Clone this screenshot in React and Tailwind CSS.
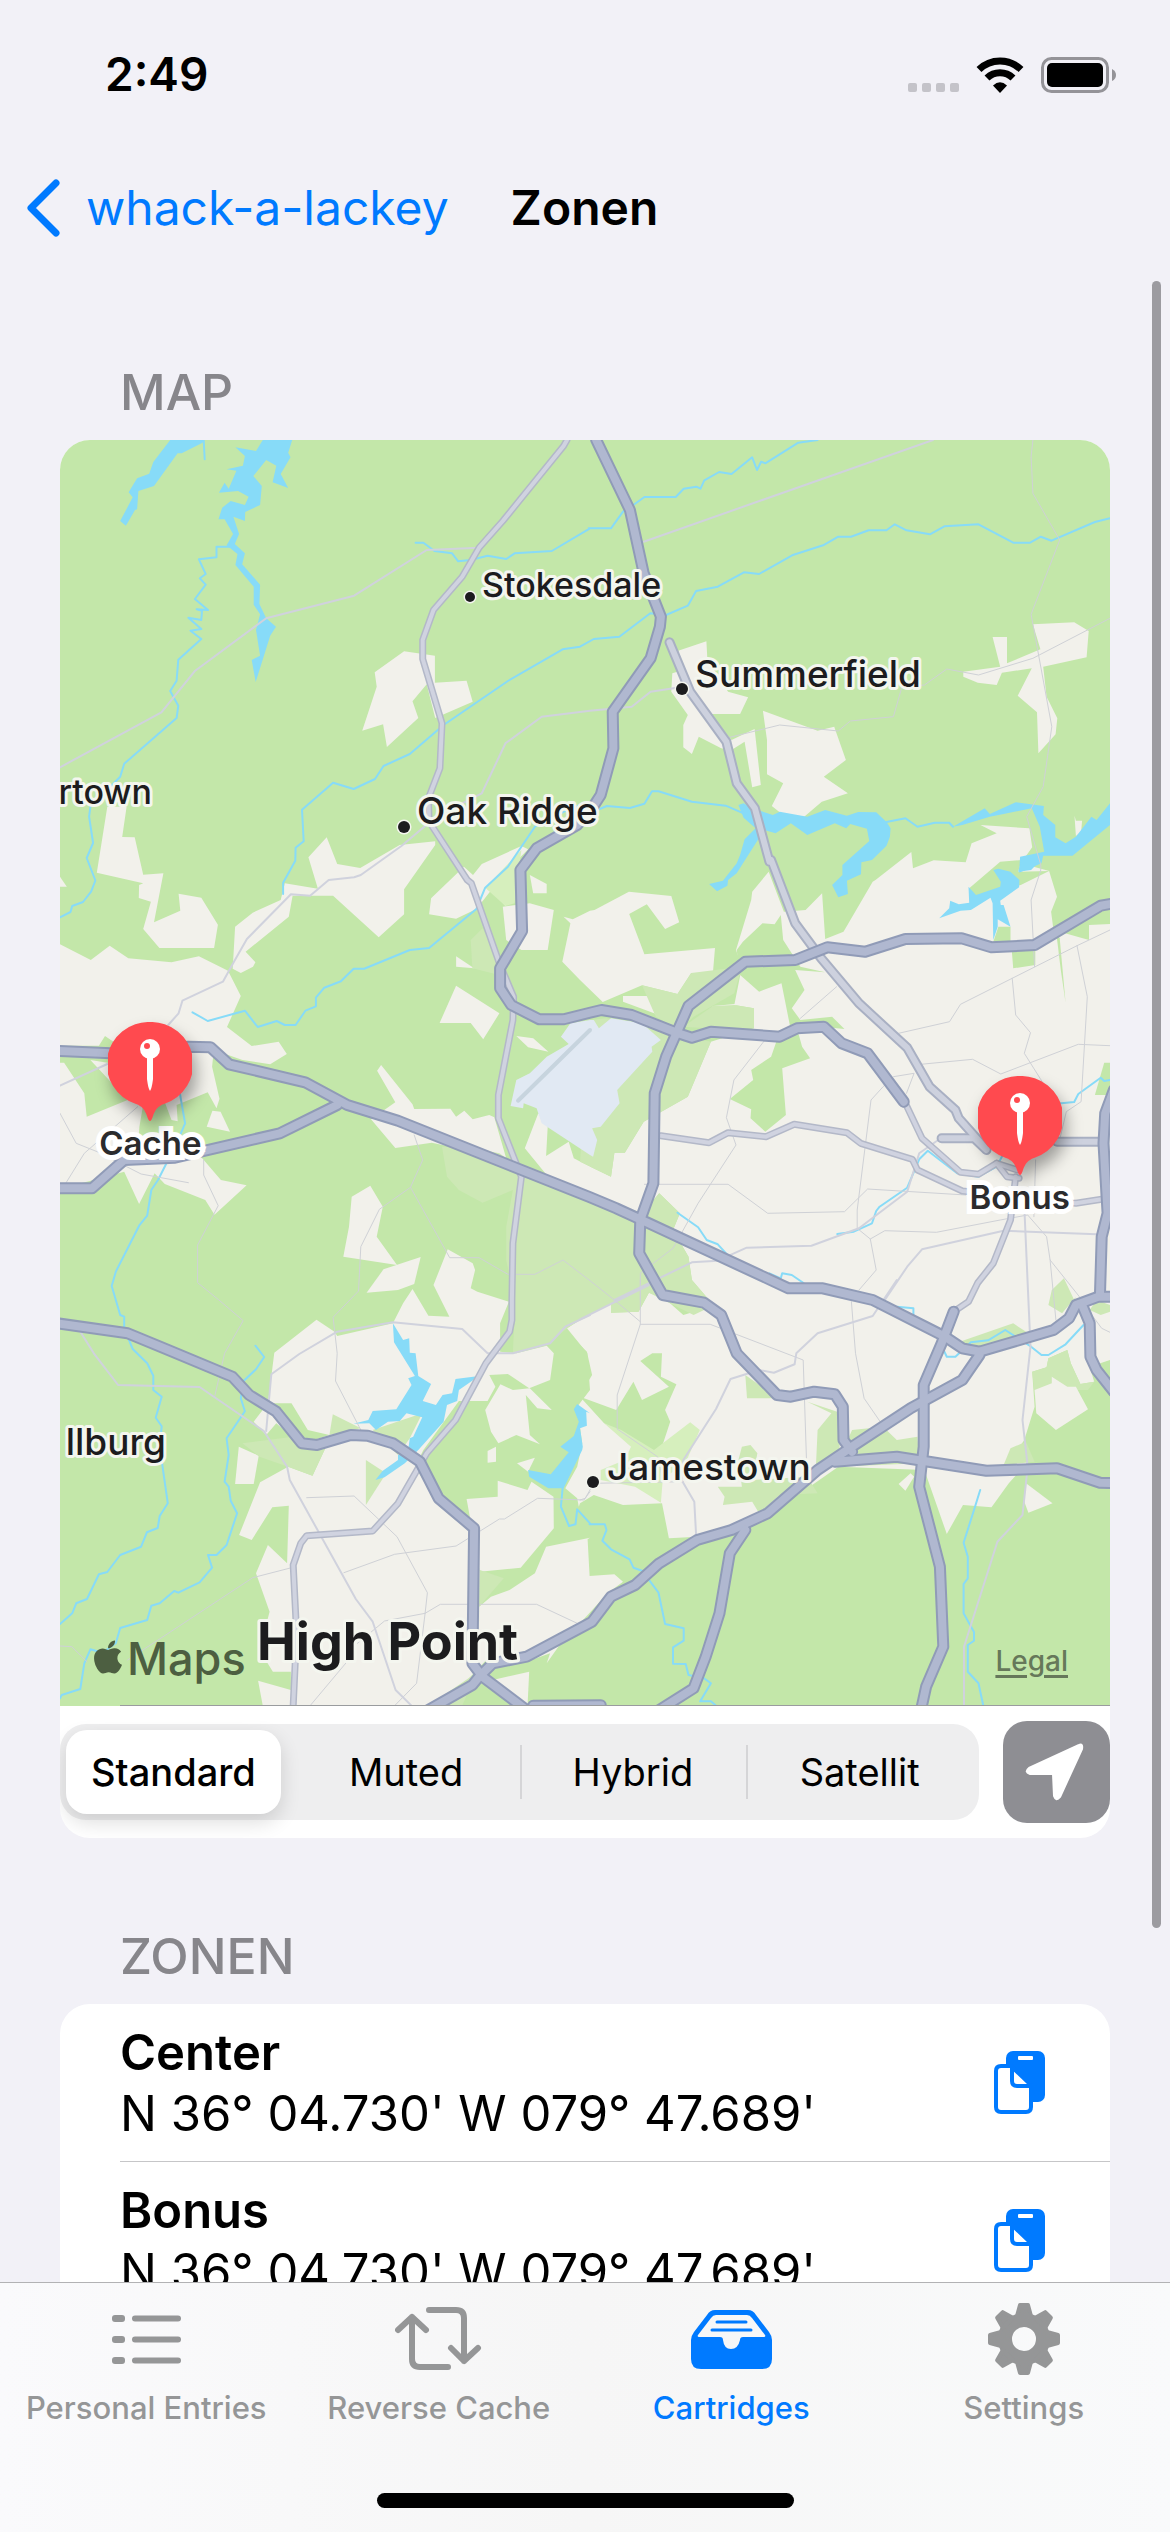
import React, { useState } from "react";
import { FaApple } from "react-icons/fa";

const SHEETS = {
  a: [0, 0, 530 / 1568],
  b: [520, 0, 540 / 1568],
  c: [0, 420, 530 / 1568],
  d: [520, 420, 540 / 1568],
  e: [0, 840, 530 / 1568],
  f: [520, 840, 540 / 1568],
};

function pts(source) {
  let sheet = SHEETS.a;
  let x = null;
  const out = [];
  for (const token of source.trim().split(/\s+/)) {
    if (SHEETS[token]) {
      sheet = SHEETS[token];
    } else if (x === null) {
      x = Number(token);
    } else {
      out.push(`${(sheet[0] + x * sheet[2]).toFixed(1)},${(sheet[1] + Number(token) / 3).toFixed(1)}`);
      x = null;
    }
  }
  return out.join(" ");
}

const URBAN = [
  "a 1018 634 1109 647 1109 728 1203 722 1221 785 1110 834 1085 733 1043 784 1060 834 967 921 956 853 894 872 937 740 931 697",
  "a 140 1100 197 1100 184 1191 221 1192 246 1304 306 1300 c 278 187 356 152 351 101 418 113 467 194 456 264 294 264 246 207 269 125 233 114 234 75 246 70 109 38",
  "c 0 253 91 300 147 257 202 295 330 307 411 289 497 332 535 408 494 501 567 558 647 545 671 582 622 613 540 600 455 570 450 620 472 716 463 745 437 697 345 735 350 812 425 900 476 960 552 976 457 1064 430 1020 310 972 280 940 234 1032 190 935 80 965 0 985",
  "c 434 800 451 752 475 755 503 815",
  "c 0 50 20 80 0 80",
  "c 763 86 a 735 1252 789 1192 820 1272 888 1284 1005 1215 1110 1204 1110 1215 c 1018 88 1018 163 943 232 808 107 688 107 677 170 549 275 578 307 571 320 535 339 511 326 518 200 570 158 653 120 665 70",
  "c 1092 163 1098 115 1195 20 1222 45 a 1248 1272 1365 1218 1385 1228 c 1315 40 1232 147 1172 176",
  "c 1123 489 1172 377 1300 460 1252 538 1215 489",
  "c 1265 80 1338 95 1318 138",
  "c 1310 140 1390 130 1461 150 1443 270 1365 270 1320 240",
  "c 1390 45 1440 72 1440 100 1400 100",
  "c 1172 289 1225 325 1172 320",
  "c 938 632 950 615 1043 733 1048 747 1155 746 1172 770 1196 752 1221 778 1270 765 1285 772 1320 895 1100 848 992 864 920 778 992 727",
  "c 1350 528 1400 535 1445 575 1385 562",
  "c 1415 760 1443 800 1438 888 1505 845 1520 895 1568 920 1568 1005 1440 945 1375 865",
  "b 285 632 367 604 370 660 430 755 488 772 465 822 378 822 440 900 507 867 525 1035 500 1042 478 905 440 930 410 925 345 890 325 942 300 922 300 855 313 825 265 755 268 700 300 690",
  "b 531 812 690 872 738 860 772 960 708 1010 778 1060 702 1085 640 1140 580 1117 557 1098 590 1030 543 1003 543 900",
  "b 1315 553 1435 547 1477 573 1471 652 1345 680 1355 770 1386 835 1381 883 1331 940 1327 817 1271 767 1312 685 1225 698 1210 735 1155 728 1113 710 1113 695 1220 680 1198 591 1240 591 1240 670 1337 628",
  "b 1436 1127 1440 1142 1458 1142 1455 1175 1440 1188",
  "c 1490 170 1517 178 1568 152 d 42 150 142 95 265 108 288 187 247 207 194 133 143 162 187 283 392 264 386 339 323 339 283 402 180 376 66 426 0 360 c 1486 305 1510 190",
  "d 125 408 227 408 223 463 125 425",
  "d 386 438 450 432 463 485 369 495",
  "d 453 270 497 120 500 95 548 35 592 155 655 150 703 100 712 237 765 215 850 65 b 858 1320 962 1236 967 1285 1027 1261 1120 1267 1137 1210 1210 1180 1163 1155 1305 1165 1313 1222 1280 1270 d 1362 33 1385 110 1368 155 1375 210 1478 240 1478 195 1539 192 f 1539 240 1480 260 1493 305 1453 312 1425 250 1415 210 1360 235 1355 262 1313 275 1320 380 1290 480 1240 555 1305 540 1245 610 1195 682 1112 675 1065 762 1000 570 750 560 640 640 530 700 340 770 258 775 238 670 125 675 40 645 0 670 e 1535 680 1530 655 1495 625 1530 560 1545 490 1530 380 1568 330 1560 220 1500 145 f 0 120 90 70 90 98 170 95 200 38 240 50 300 105 380 80 d 375 1320 325 1260 315 1190 270 1110 290 1060 230 1000 180 1060 0 990 0 905 90 950 100 878 130 878 185 785 313 710 380 545 505 505 505 445 448 435 470 320",
  "f 925 612 960 580 970 590 945 632",
  "f 1295 610 1372 670 1302 698 1290 665",
  "f 1358 85 1370 62 1402 92",
  "e 759 119 812 155 820 168 985 130 1015 70 1043 27 1090 107 1152 110 1105 15 c 1105 1275 1147 1168 1221 1210 1228 1230 1215 1285 e 1235 35 1328 65 1302 130 1302 215 1350 220 1440 197 1461 220 1450 300 1388 325 1325 282 1270 285 1288 320 1265 363 1180 363 1075 510 1050 560 1120 670 1215 740 1242 875 1240 1020 1270 1130 1205 1200 1090 1277 600 1277 586 1202 683 1230 683 1175 630 1175 590 1110 620 995 580 880 615 795 672 850 677 677 628 682 567 780 530 765 592 607 675 560 747 587 787 500 720 500 680 465 640 430 610 465 573 425 615 370 625 290 634 218",
  "e 529 500 588 527 573 612 518 612",
  "e 1203 657 1295 650 1295 602 1383 630 1395 605 1460 650 1461 745 1363 863 1242 875",
  "e 1438 800 1568 773 f 22 778 28 888 100 883 125 905 80 940 0 1030 e 1485 1085 1440 1150 1450 1120 1380 1145 1240 1130 1240 980 1275 950 1330 930 1405 880",
  "e 1258 390 1303 313 1340 330 1390 325 1455 390 1412 385 1378 345 1390 465 1420 493 1350 465 1297 490 1275 455",
  "e 1265 513 1290 500 1290 545 1265 548",
  "e 1352 550 1405 533 1385 575",
  "c 863 1010 918 977 955 1040 937 1130 997 1215 838 1190 855 1100",
  "c 907 1298 957 1228 1067 1191 1048 1272 e 1000 30 907 38",
  "e 1280 1200 1388 1175 1383 1277",
];

const WOODS = [
  "c 0 557 115 557 133 528 180 560 150 610 90 600 145 660 200 720 79 770 72 700 12 608 0 608",
  "c 245 740 300 700 330 780 380 790 360 870 230 870 235 800",
  "d 473 245 530 190 565 193 583 165 590 240 640 320 712 337 625 330 652 390 615 445 640 480 732 470 768 507 700 500 630 505 645 560 668 595 587 625 598 765 538 815 495 775 497 748 435 717 503 660 497 630 555 590 570 545 612 510 585 370 520 395 465 345 455 270",
  "d 1215 200 1250 200 1250 250 1322 260 1322 315 1258 325 1252 250 1200 245",
  "d 1383 220 1393 235 1410 428 1396 330",
  "d 1522 608 1539 608 1539 705 1495 705",
  "d 1130 85 1220 5 1283 0 1272 35 1362 33 1280 75 1150 110",
  "e 625 370 685 370 733 450 797 465 720 490 650 400",
  "f 0 195 20 215 35 285 0 345",
  "f 0 350 105 390 155 305 180 360 258 320 175 243 210 220 238 220 235 290 280 313 247 390 262 425 235 510 215 512 70 430",
];

const CLEARINGS = ["f 1320 330 1370 310 1370 290 1415 320 1440 320 1475 388 1382 450 1325 400"];

const PARKS = [
  "c 1130 860 1200 860 1300 880 1400 950 1568 1030 d 180 1070 230 1000 290 1060 270 1110 315 1190 325 1260 375 1320 f 380 80 330 105 200 38 170 95 90 98 90 70 0 120 e 1500 145 1440 195 1340 220 1345 100 c 1345 1320 1320 1200 1320 1100 1340 990 1250 1028 1180 990 1145 950",
  "c 1215 240 1250 205 1300 300 1300 345 1220 325",
  "c 1568 480 d 75 475 180 490 260 520 380 545 313 710 185 785 130 878 100 878 90 950 0 905",
  "d 180 376 283 402 323 339 470 320 448 400 330 470 290 510 220 470",
  "d 386 438 300 500 369 505 505 505 505 445 448 435",
  "d 1405 1255 1435 1320 f 1440 50 1400 100 1360 75 1370 30",
  "f 1090 190 1258 130 1310 165 1180 200",
  "f 1480 90 1500 60 1539 75 1539 95 1512 105",
  "f 480 285 575 355 485 355",
  "f 660 365 730 400 690 450 685 560 760 520 790 450 880 440 920 480 980 470 985 550 750 560 760 400",
  "f 470 500 495 495 515 520 500 600 660 590 690 640 580 645 520 700 500 665 415 675 420 650 400 620 470 620 460 540",
  "f 1313 275 1355 262 1360 235 1415 210 1425 250 1453 312 1493 305 1475 330 1400 330 1320 345",
  "f 1250 505 1295 485 1320 545 1230 555",
  "e 807 403 890 445 797 465",
  "e 540 490 690 470 730 500 787 500 747 587 675 560 590 530",
  "e 905 540 965 580 905 675",
  "e 1242 870 1313 895 1240 980",
  "e 1090 1277 1230 1180 1190 1277",
  "e 925 450 1072 400 1035 475 1000 525",
];

const MEADOWS = [
  "f 320 427 348 450 310 540 240 600 235 668 160 620 60 600 60 570 130 540 148 500 70 430 120 450 215 510",
  "c 1258 83 a 1365 1230 c 1345 130 1318 138",
];

const AIRPORT =
  "c 1568 480 1510 490 1482 530 1505 552 1440 590 1390 640 1350 660 1333 738 1370 745 1372 730 1410 745 1425 790 1568 885 d 38 890 50 840 35 805 60 800 115 730 108 690 210 575 208 560 235 540 180 490 90 475 55 505 40 480";

const LAKES = [
  "a 326 0 425 0 422 8 360 40 348 40 278 138 232 153 228 208 222 210 195 257 178 243 215 172 203 157 228 115 264 101 276 66",
  "a 600 0 687 0 675 38 682 52 653 102 675 144 629 127 640 77 610 60 572 108 597 138 592 195 548 216 547 243 513 230 530 282 517 312 547 340 539 373 592 434 590 492 610 535 639 560 622 587 579 726 567 660 592 647 580 570 592 523 573 494 573 440 519 375 525 342 493 316 512 282 487 238 469 238 480 203 505 183 547 195 558 170 527 153 470 158 487 128 499 146 522 92 493 88 541 77 547 48 519 22 580 33",
  "b 460 1095 475 1090 500 1105 560 1125 580 1115 660 1130 712 1110 775 1127 808 1116 860 1117 890 1146 902 1165 900 1190 890 1217 848 1260 817 1267 816 1303 d 775 62 778 102 750 112 732 75 762 45 b 762 1275 840 1203 833 1166 785 1152 773 1165 740 1150 660 1185 612 1150 568 1180 535 1170 455 1300 d 430 60 428 77 398 94 375 72 415 62 b 455 1270 465 1245 478 1198 510 1165 475 1133",
  "b 1083 1160 1175 1105 1190 1122 1265 1087 1347 1098 1345 1125 1380 1155 1380 1192 1410 1210 1440 1190 1485 1130 1500 1140 1539 1090 1539 1155 1430 1247 1345 1247 1340 1270 1275 1298 1278 1250 1348 1235 1335 1160 1312 1105 1230 1122 1190 1130 1110 1155",
  "d 1200 30 1215 26 1250 35 1276 60 1275 82 1220 122 1222 135 1230 135 1250 200 1213 178 1213 200 1200 240 1198 130 1192 113 1135 150 1105 152 1043 175 1072 145 1075 122 1100 133 1130 128 1128 80 1150 105 1220 80 1222 65",
  "d 1283 0 1338 0 1310 30 1272 35",
  "e 985 130 1015 180 1033 175 1035 218 1052 220 1060 288 1098 312 1073 363 1112 375 1132 345 1160 340 1170 297 1240 288 1180 330 1175 363 1145 375 1135 425 1060 510 1020 550 960 592 933 600 955 572 1000 540 1000 525 1030 510 1035 475 1045 470 1072 412 1025 400 1005 423 970 425 935 450 915 430 868 431 912 420 925 393 995 388 1040 315 1030 295 1050 288 988 187",
  "e 1520 388 1530 372 1568 400 f 18 395 20 437 0 445 8 500 e 1545 510 1490 625 1445 625 1388 590 1385 570 1452 583 1505 517 1480 500 1520 468 1535 425",
];

const STREAMS = [
  "a 425 0 428 58",
  "a 502 320 463 320 463 352 411 358 431 402 414 415 431 434 399 477 438 510 404 508 420 512 418 540 380 533 418 567 386 572 418 597 350 659 345 722 326 753 350 797 345 834 190 971 178 1010 90 1100 86 1130 98 1209 79 1254 104 1320 c 104 63 92 95 68 126 36 138 31 156 0 172",
  "a 1052 308 1075 308 1108 333 1160 340 1178 364 1215 360 1265 347 1320 357 1345 340 1455 333 1568 265 b 25 265 90 265 125 215 155 195 187 171 278 171 301 146 338 140 350 146 361 121 404 96 440 102 500 52 514 90 526 65 538 70 634 8 690 0",
  "b 1539 235 1495 246 1369 302 1338 290 1307 308 1258 308 1157 253 1058 259 1016 283 948 271 914 253 890 271 838 271 787 290 750 290 706 316 616 346 520 402 476 397 400 440 337 453 313 497 250 525 204 520 114 590 40 597 0 620 a 1487 628 1325 723 1135 855 1035 942 957 978 932 1017 869 1047 808 1028 716 1109 721 1204 697 1223 696 1262 c 660 68 660 102",
  "b 50 1110 78 1098 145 1104 187 1091 209 1054 228 1054 325 1085 423 1097 475 1120",
  "b 890 1146 945 1135 980 1160 1030 1148 1072 1148 1083 1160",
  "a 1568 1090 1520 1100 1405 1160 1325 1280 c 1258 83 1232 147 1092 264 1035 270 900 326 869 326 831 364 782 383 757 413 757 439 726 452 697 495 665 495 641 483 585 501 547 452 437 483 392 457",
  "c 353 690 370 790 345 850 290 960 270 990 258 1067 234 1097 165 1235 153 1278 e 178 105 190 110 190 145 215 207 258 250 276 287 276 330 301 350 283 413 301 439 295 500 319 670 295 708 289 744 257 757 240 800 178 825 140 876 115 883 80 957 48 970 36 1000 0 1032",
  "e 578 197 604 231 580 268 543 303 535 355 547 394 493 475 499 525 487 605 499 620 505 662 524 700 493 795 463 825 438 825 450 863 413 907 350 938 338 933 295 970 270 977 258 1020 178 1044 165 1090 125 1118 90 1108 72 1150 60 1227 5 1245 0 1255",
  "e 1487 625 1482 680 1506 738 1525 733 1530 688 1568 730 f 28 733 72 733 77 750 65 782 90 808 144 838 155 863 180 872 228 938 247 1032 301 1045 301 1082 270 1102 270 1151 307 1152 315 1185 360 1195 380 1210 349 1264 380 1264 395 1277",
  "f 1162 630 1144 690 1114 788 1126 830 1126 895 1114 912 1114 1000 1144 1056 1144 1082 1126 1095 1126 1175 1157 1210 1171 1277",
  "f 1058 215 1065 230 1090 230 1135 187 1185 181 1235 150 1280 180 1310 200 1340 225 1360 225 1410 193 1462 135",
  "f 920 80 968 85 968 105",
  "d 283 1058 343 1102 368 1140 400 1153 430 1187",
  "d 747 1122 795 1115 848 1090 860 1053 870 1040 950 983 985 898 1010 872 1095 940 1157 950 1210 920 1235 870",
  "d 1375 732 1435 726 1447 702 1512 653 1522 663 1539 660",
  "d 550 1240 583 1255 587 1240 615 1245 650 1270",
];

const LANES = [
  "a 0 982 300 817 400 692 610 535 870 467 1085 330 1240 323",
  "b 185 305 1025 0",
  "a 1090 1150 1010 1218 890 1305 c 870 52 795 60 740 107 683 103 553 237 512 310 482 365 362 422 351 460 320 495",
  "a 1190 1090 1248 1060 1318 910 1425 830 1568 812 b 150 800 205 755 290 742",
  "c 0 677 140 612",
  "d 100 1320 325 1207 400 1202 484 1163 672 1157 810 1105 950 995 985 880 1040 840",
  "d 885 1320 950 1220 993 1168 1230 1112 1500 1123",
  "f 0 118 200 15",
  "f 920 0 850 108 690 160 628 220 623 253 563 278 520 270 437 297 395 387 300 540 295 600 332 665 337 765",
  "d 1290 1040 1302 1320 f 1308 200 1285 420 1300 560 1285 705 1212 785 1115 1100 1115 1277",
  "e 60 155 100 220 172 315 413 321 603 453 672 560 680 600 875 957 925 1025 993 1230 1040 1277",
  "e 610 453 625 283 708 222 820 155 985 127 1190 147 1265 220 1340 220 1450 190 1495 140 1568 105",
];

const PATHS = [
  "b 430 893 580 855 750 873 785 843 910 830 935 740 1000 735 1065 687 1157 705 1315 655 1539 535",
  "b 1315 0 1310 50 1315 160 1393 300 1310 523 1370 860 1345 1040 1297 1130 1338 1275 d 1338 30 1310 120 1320 320",
  "c 0 760 48 850 110 875 240 942 380 968",
  "c 18 968 72 880 230 740",
  "c 425 900 425 945 468 1037 407 1155 407 1268 470 1320 e 542 122 487 220 457 352",
  "c 1048 825 1073 900 1037 982 945 1048 890 1160 883 1293 e 808 112 820 220 815 303 890 450",
  "c 1037 982 1153 1193 1240 1193 1325 1243 1405 1243 1488 1200 1568 1262 d 100 1320 f 175 125",
  "d 175 1320 175 1240 270 1165 343 1030 453 855 425 773 447 660 533 545",
  "f 175 0 175 133 108 345 108 447 225 530 240 600",
  "f 175 133 378 133 648 240 658 550",
  "f 0 660 15 655 40 610 300 605",
  "d 187 973 430 973 545 1060 768 1055 835 987 1120 1005",
  "d 810 1290 860 1230 843 1137 805 1105 805 1050 845 720 880 680 910 650 970 640 948 700",
  "f 788 65 800 220 825 355 875 430",
  "d 843 1137 885 1112 1035 1117 1220 1080 1300 1065 1355 1130 1365 1200 1450 1310",
  "d 1365 1200 f 1382 120",
  "d 1323 900 1318 1070",
  "d 925 520 1073 485 1105 433 1443 257 1539 210",
  "d 1443 257 1473 410 1455 725 1412 755 1395 830",
  "d 990 613 1140 598 1222 642 1447 553 1539 557",
  "d 1255 355 1265 465 1308 518 1290 580 1345 670",
  "d 745 380 640 475",
  "f 1490 110 1515 145 1539 157",
  "e 730 653 870 648 997 770 1087 938 1080 1000 960 1023 880 1090",
  "e 840 878 990 823 1172 798 1300 717 1315 717 1413 655 1550 660 1568 635",
  "e 740 1277 870 1120",
  "e 1080 1000 1055 1210 990 1277",
  "e 1080 1000 1125 973 1410 973 1530 1030",
  "e 685 863 570 893 350 1040 200 1140",
  "e 0 1098 35 1100 80 1145",
];

const ROADS = [
  "a 1500 0 1490 18 1310 243 1240 323 1190 410 1105 510 1073 600 1073 657 1130 850 1124 985 1090 1075 1092 1145 1205 1320 c 1217 70 1300 310 1342 410 1340 480 1297 705 1297 775 1365 950 1340 1150 1337 1320 e 1337 120 1330 155 1260 250 1170 420 1085 520 1000 670 925 753 730 767 712 790 690 855 700 1060 690 1277",
  "d 235 827 375 848 430 818 540 830 622 793 775 818 815 850 965 898 980 930 1110 993 1440 1030 1515 1018",
  "d 945 730 993 835 1105 937 1157 943 1210 910 1270 930",
  "d 1210 910 1240 950 1275 955",
  "d 1265 950 1250 1080 1200 1210 1155 1268 f 1128 65 1085 95",
];

const WIDE_ROADS = [
  "b 260 607 320 755 425 905 455 1030 508 1105 550 1265 d 555 0 625 190 700 295 810 430 950 563 1015 680 1090 750 1100 775 1180 868",
  "d 1050 835 1145 835 1180 870",
  "d 1385 845 1510 845",
];

const HIGHWAYS = [
  "b 47 0 145 210 185 400 235 530 232 560 205 655 95 815 97 925 60 1065 35 1105 a 1530 1155 1410 1225 1362 1290 c 1362 30 1367 213 1302 325 1302 385 1335 435 1418 478 1490 478 1568 458 d 62 450 150 465 285 520 325 533 380 515 580 530 630 505 708 500 760 550 835 580 940 725",
  "d 1550 130 1512 137 1320 255 1195 262 1108 235 945 237 828 275 718 262 625 300 480 305 315 438 250 590 217 700 213 970 175 1080 172 1180 240 1305 f 360 68 410 105 455 220 572 345 612 350 680 335 740 343 763 380 765 480 790 515",
  "c -20 572 150 580 380 560 445 562 500 613 725 667 850 735 1000 782 1568 1012 d 105 1045 200 1090 605 1285 705 1285 850 1320 f 1060 170 1110 205 1160 215 1375 150 1420 115 1440 75 1505 50 1560 50",
  "c -20 985 95 985 190 900 340 893 650 820 820 735",
  "d 1550 690 1525 760 1520 850 1532 1060 1515 1130 1510 1300",
  "f 1460 80 1480 130 1482 230 1500 270 1550 335",
  "f 1085 95 1050 190 998 315 998 500 985 620 1045 860 1055 1100 1005 1220 988 1300",
  "f 1160 225 1110 300 960 385 790 500 690 570 545 700 440 750 340 780 230 850 160 915 90 950 35 1025 0 1045 e 1380 1130 1280 1150 1240 1190 1220 1215 1090 1290",
  "f 740 545 920 530 1180 572 1385 565 1510 608 1560 610",
  "f 480 750 435 820 405 1000 365 1130 330 1225 230 1290",
  "e -20 128 200 160 320 210 510 290 560 345 640 395 715 490 760 495 860 465 910 467 985 490 1065 545 1120 655 1225 745 1220 1150 1250 1190 1380 1290",
  "e 1400 1277 1600 1276",
];

const TOWNS = [
  { name: "Stokesdale", x: 422, y: 157, size: 34, dot: [410, 157, 5] },
  { name: "Summerfield", x: 635, y: 247, size: 37, dot: [622, 249, 6] },
  { name: "Oak Ridge", x: 357, y: 384, size: 37, dot: [344, 387, 6] },
  { name: "Jamestown", x: 547, y: 1040, size: 37, dot: [533, 1042, 6] },
  { name: "rtown", x: 92, y: 364, size: 34, anchor: "end" },
  { name: "llburg", x: 106, y: 1015, size: 37, anchor: "end" },
];

function Shapes({ items, fill }) {
  return (
    <g fill={fill}>
      {items.map((s) => (
        <polygon key={s} points={pts(s)} />
      ))}
    </g>
  );
}

function Lines({ items, color, width, cap = "round" }) {
  return (
    <g fill="none" stroke={color} strokeWidth={width} strokeLinejoin="round" strokeLinecap={cap}>
      {items.map((s) => (
        <polyline key={s} points={pts(s)} />
      ))}
    </g>
  );
}

function MapCanvas() {
  return (
    <svg viewBox="0 0 1050 1266" className="block h-auto w-full bg-[#c3e7a9]" role="img" aria-label="Map of zones">
      <Shapes items={URBAN} fill="#f2f1eb" />
      <Shapes items={PARKS} fill="#cde8b5" />
      <Shapes items={WOODS} fill="#c3e7a9" />
      <Shapes items={CLEARINGS} fill="#f2f1eb" />
      <Shapes items={MEADOWS} fill="#d6efbd" />
      <Shapes items={[AIRPORT]} fill="#e1e9f3" />
      <Lines items={["c 1355 722 1568 510 d 28 512"]} color="#c7d4de" width={4} />
      <Shapes items={LAKES} fill="#87dbf8" />
      <Lines items={STREAMS} color="#87dbf8" width={2} />
      <Lines items={PATHS} color="#cfd1d6" width={1} />
      <Lines items={LANES} color="#d0d2dd" width={2} />
      <Lines items={ROADS} color="#b3b8c8" width={7} />
      <Lines items={ROADS} color="#d0d3e0" width={4} />
      <Lines items={WIDE_ROADS} color="#a9b0c3" width={10} />
      <Lines items={WIDE_ROADS} color="#cdd1de" width={6} />
      <Lines items={HIGHWAYS} color="#909bb7" width={12} />
      <Lines items={HIGHWAYS} color="#b0b8d0" width={8} />
      <g fontFamily="Inter, sans-serif" fontWeight="500" fill="#1c1c1e" stroke="#f4f6ef" strokeLinejoin="round" strokeWidth="6" paintOrder="stroke">
        {TOWNS.map((t) => (
          <g key={t.name}>
            {t.dot && <circle cx={t.dot[0]} cy={t.dot[1]} r={t.dot[2]} strokeWidth="3" />}
            <text x={t.x} y={t.y} fontSize={t.size} textAnchor={t.anchor}>
              {t.name}
            </text>
          </g>
        ))}
        <text x="197" y="1220" fontSize="52" fontWeight="700">
          High Point
        </text>
      </g>
      <path d="M60 1265.5H1050" stroke="#9a9c9e" strokeWidth="1" />
    </svg>
  );
}

function Pin({ name, className }) {
  return (
    <button type="button" className={`absolute flex w-32 -translate-x-1/2 flex-col items-center ${className}`}>
      <svg viewBox="0 0 84 100" className="h-[100px] w-[84px] drop-shadow-[4px_10px_8px_rgba(0,0,0,0.35)]" aria-hidden="true">
        <path d="M42 0a42 42 0 0 1 14 82c-6 2-9 6-11 12q-3 10-6 0c-2-6-5-10-11-12A42 42 0 0 1 42 0Z" fill="#ff4a4f" />
        <circle cx="42" cy="27" r="10" fill="#fff" />
        <circle cx="39" cy="24" r="3" fill="#ff4a4f" />
        <path d="M39 36h6v21q-1 9-3 12q-2-3-3-12Z" fill="#fff" />
      </svg>
      <span className="text-[33px] leading-[42px] font-semibold text-[#2b2b2d] [paint-order:stroke] [-webkit-text-stroke:10px_white]">
        {name}
      </span>
    </button>
  );
}

function StatusBar() {
  return (
    <div className="flex h-[148px] shrink-0 items-center justify-between pr-[54px] pl-[105px]">
      <time className="text-[46px] leading-none font-semibold">2:49</time>
      <div className="flex items-end">
        <div className="mr-4 flex gap-[5px] pb-px">
          <i className="size-[9px] rounded-xs bg-[#c4c3c9]" />
          <i className="size-[9px] rounded-xs bg-[#c4c3c9]" />
          <i className="size-[9px] rounded-xs bg-[#c4c3c9]" />
          <i className="size-[9px] rounded-xs bg-[#c4c3c9]" />
        </div>
        <svg viewBox="0 0 50 37" className="mr-4 h-[37px] w-[50px]" aria-hidden="true">
          <path d="M4 13.5A30 30 0 0 1 46 13.5" fill="none" stroke="#000" strokeWidth="7" />
          <path d="M12 22A18.500 18.500 0 0 1 38 22" fill="none" stroke="#000" strokeWidth="7" />
          <path d="M18 29.500Q25 23 32 29.500L25 37Z" />
        </svg>
        <svg viewBox="0 0 75 36" className="h-9 w-[75px]" aria-hidden="true">
          <rect x="1.500" y="1.500" width="65" height="33" rx="9" fill="none" stroke="#949398" strokeWidth="3" />
          <rect x="6" y="6" width="56" height="24" rx="5" />
          <path d="M71 12Q75 14 75 18T71 24Z" fill="#949398" />
        </svg>
      </div>
    </div>
  );
}

function NavBar() {
  return (
    <header className="flex h-[120px] shrink-0 items-center gap-[62px] pl-[26px]">
      <a href="#back" className="flex items-center gap-[26px] text-[48px] leading-none text-[#007aff]">
        <svg viewBox="0 0 34 58" className="h-[58px] w-[34px]" aria-hidden="true">
          <path d="M30 4 5 29 30 54" fill="none" stroke="currentColor" strokeWidth="7" strokeLinecap="round" strokeLinejoin="round" />
        </svg>
        whack-a-lackey
      </a>
      <h1 className="text-[48px] leading-none font-semibold">Zonen</h1>
    </header>
  );
}

const MODES = ["Standard", "Muted", "Hybrid", "Satellit"];

function MapControls() {
  const [mode, setMode] = useState("Standard");
  return (
    <div className="flex items-center gap-6 py-[15px]">
      <div role="radiogroup" aria-label="Map type" className="grid h-24 flex-1 grid-cols-4 rounded-[26px] bg-[#eeeeef] p-[6px]">
        {MODES.map((m, i) => (
          <label key={m} className="relative flex">
            {i > 1 && <span className="absolute top-1/2 left-0 h-[54px] w-[2px] -translate-y-1/2 bg-[#d5d5d7]" />}
            <input type="radio" name="map-type" value={m} checked={mode === m} onChange={() => setMode(m)} className="peer sr-only" />
            <span className="flex flex-1 items-center justify-center rounded-[21px] text-[38px] leading-none peer-checked:mr-3 peer-checked:bg-white peer-checked:font-medium peer-checked:shadow-[0_8px_20px_rgba(0,0,0,0.14)]">
              {m}
            </span>
          </label>
        ))}
      </div>
      <button type="button" aria-label="Show my location" className="h-[102px] w-[107px] rounded-3xl bg-[#8e8e93]">
        <svg viewBox="0 0 107 102" aria-hidden="true">
          <path d="M76 24 26 47Q21 51 27 53L50 53 51 75Q53 81 57 76L79 28Q80 22 76 24Z" fill="#fff" stroke="#fff" strokeWidth="2" strokeLinejoin="round" />
        </svg>
      </button>
    </div>
  );
}

function CopyIcon() {
  return (
    <svg viewBox="0 0 51 64" className="h-16 w-[51px]" aria-hidden="true">
      <rect x="12" y="0" width="39" height="51" rx="7" fill="#007aff" />
      <rect x="24" y="5" width="15" height="4" rx="1" fill="#fff" />
      <path d="M7 15H17L37 34V56Q37 61 32 61H7Q2 61 2 56V20Q2 15 7 15Z" fill="#fff" stroke="#007aff" strokeWidth="4" />
      <path d="M18 15V30Q18 35 23 35H37" fill="none" stroke="#007aff" strokeWidth="4" />
    </svg>
  );
}

const ZONES = [
  { name: "Center", position: "N 36° 04.730' W 079° 47.689'" },
  { name: "Bonus", position: "N 36° 04.730' W 079° 47.689'" },
];

function ZoneRow({ zone, last }) {
  return (
    <li className="pl-[60px]">
      <div className={`flex h-[158px] items-center justify-between pr-[65px] ${last ? "" : "border-b border-[#c6c6c8]"}`}>
        <div className="leading-[61px]">
          <h3 className="text-[49px] font-semibold">{zone.name}</h3>
          <p className="text-[49px]">{zone.position}</p>
        </div>
        <button type="button" aria-label={`Copy ${zone.name}`}>
          <CopyIcon />
        </button>
      </div>
    </li>
  );
}

function SectionTitle({ children }) {
  return <h2 className="mb-[18px] pl-[60px] text-[50px] leading-[60px] font-medium text-[#87868b]">{children}</h2>;
}

const TEETH = [0, 45, 90, 135, 180, 225, 270, 315];

const TAB_ICONS = {
  list: (
    <svg viewBox="0 0 69 49" className="h-[49px] w-[69px]" fill="currentColor">
      {[0, 21, 42].map((y) => (
        <g key={y}>
          <rect x="0" y={y} width="13" height="7" rx="3" />
          <rect x="20" y={y + 0.5} width="49" height="6" rx="3" />
        </g>
      ))}
    </svg>
  ),
  repeat: (
    <svg viewBox="0 0 87 64" className="h-16 w-[87px]" fill="none" stroke="currentColor" strokeWidth="6" strokeLinecap="round" strokeLinejoin="round">
      <path d="M3 23 17 10 31 23M17 10V52Q17 60 25 60H53" />
      <path d="M34 3H61Q69 3 69 11V54M56 41 69 54 83 41" />
    </svg>
  ),
  tray: (
    <svg viewBox="0 0 81 59" className="h-[59px] w-[81px]">
      <path
        fillRule="evenodd"
        fill="currentColor"
        d="M24 0H57Q62 0 65 5L78 22Q81 26 81 30V49Q81 59 71 59H10Q0 59 0 49V30Q0 26 3 22L16 5Q19 0 24 0ZM25 5Q22 5 20 8L7 25Q6 27 8 27H29Q32 27 32 30Q33 39 40 39T49 30Q49 27 52 27H73Q75 27 74 25L61 8Q59 5 56 5Z"
      />
      <path d="M26 12H55M21 20H60" stroke="currentColor" strokeWidth="3" strokeLinecap="round" />
    </svg>
  ),
  gear: (
    <svg viewBox="-36 -36 72 72" className="size-[72px]">
      <circle r="19" fill="none" stroke="currentColor" strokeWidth="14" />
      {TEETH.map((a) => (
        <path key={a} transform={`rotate(${a})`} d="M-7-23-4-34H4L7-23Z" fill="currentColor" stroke="currentColor" strokeWidth="4" strokeLinejoin="round" />
      ))}
    </svg>
  ),
};

const TABS = [
  { label: "Personal Entries", icon: "list" },
  { label: "Reverse Cache", icon: "repeat" },
  { label: "Cartridges", icon: "tray", active: true },
  { label: "Settings", icon: "gear" },
];

function TabBar() {
  return (
    <nav className="shrink-0 border-t border-[#b2b2b4] bg-linear-to-r from-[#fafafc] via-[#f6f6f6] to-[#f9fafb] pt-5 pb-6">
      <ul className="grid grid-cols-4">
        {TABS.map((t) => (
          <li key={t.label}>
            <a
              href={`#${t.icon}`}
              aria-current={t.active ? "page" : undefined}
              className={`flex flex-col items-center gap-4 text-[31px] leading-[34px] font-medium whitespace-nowrap ${t.active ? "text-[#007aff]" : "text-[#959697]"}`}
            >
              <span className="flex h-[72px] items-center">{TAB_ICONS[t.icon]}</span>
              {t.label}
            </a>
          </li>
        ))}
      </ul>
      <div className="mx-auto mt-[68px] h-[15px] w-[417px] rounded-full bg-black" />
    </nav>
  );
}

export default function App() {
  return (
    <div className="flex h-screen flex-col bg-[#f2f1f7] font-[Inter,sans-serif] text-black">
      <StatusBar />
      <NavBar />
      <main className="relative min-h-0 flex-1 overflow-hidden px-[60px] pt-[94px]">
        <section>
          <SectionTitle>MAP</SectionTitle>
          <div className="overflow-hidden rounded-[30px] bg-white">
            <div className="relative overflow-hidden">
              <MapCanvas />
              <Pin name="Cache" className="top-[46%] left-[8.6%]" />
              <Pin name="Bonus" className="top-[50.2%] left-[91.4%]" />
              <div className="absolute bottom-[21px] left-[29px] flex items-center text-[45px] leading-[52px] font-medium text-[#4d5f41]">
                <FaApple className="-mt-1 size-[38px]" aria-hidden="true" />
                Maps
              </div>
              <a href="#legal" className="absolute right-[42px] bottom-7 text-[28px] leading-[34px] font-medium text-[#66785a] underline decoration-[3px] underline-offset-4">
                Legal
              </a>
            </div>
            <MapControls />
          </div>
        </section>
        <section className="mt-[88px]">
          <SectionTitle>ZONEN</SectionTitle>
          <ul className="overflow-hidden rounded-[30px] bg-white">
            {ZONES.map((z, i) => (
              <ZoneRow key={z.name} zone={z} last={i === ZONES.length - 1} />
            ))}
          </ul>
        </section>
        <div className="absolute top-[13px] right-[9px] h-[1647px] w-[9px] rounded-full bg-[#9c9ba0]" />
      </main>
      <TabBar />
    </div>
  );
}
